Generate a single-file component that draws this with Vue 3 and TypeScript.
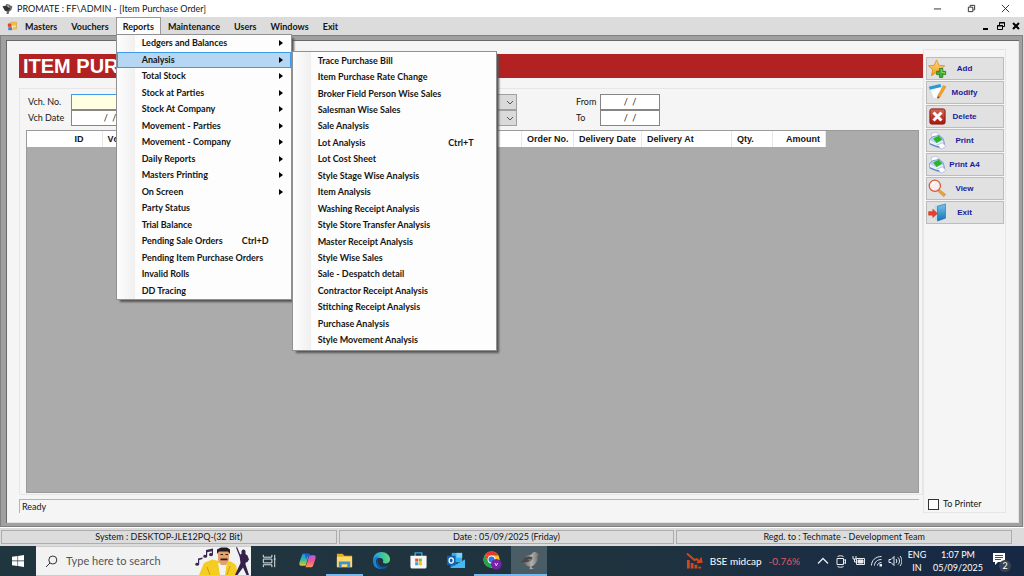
<script setup lang="ts">
import { ref } from 'vue'

interface MenuEntry {
  label: string
  shortcut?: string
  children?: boolean
}

const topMenus: string[] = ['Masters', 'Vouchers', 'Reports', 'Maintenance', 'Users', 'Windows', 'Exit']

const reports: MenuEntry[] = [
  { label: 'Ledgers and Balances', children: true },
  { label: 'Analysis', children: true },
  { label: 'Total Stock', children: true },
  { label: 'Stock at Parties', children: true },
  { label: 'Stock At Company', children: true },
  { label: 'Movement - Parties', children: true },
  { label: 'Movement - Company', children: true },
  { label: 'Daily Reports', children: true },
  { label: 'Masters Printing', children: true },
  { label: 'On Screen', children: true },
  { label: 'Party Status' },
  { label: 'Trial Balance' },
  { label: 'Pending Sale Orders', shortcut: 'Ctrl+D' },
  { label: 'Pending Item Purchase Orders' },
  { label: 'Invalid Rolls' },
  { label: 'DD Tracing' },
]

const analysis: MenuEntry[] = [
  { label: 'Trace Purchase Bill' },
  { label: 'Item Purchase Rate Change' },
  { label: 'Broker Field Person Wise Sales' },
  { label: 'Salesman Wise Sales' },
  { label: 'Sale Analysis' },
  { label: 'Lot Analysis', shortcut: 'Ctrl+T' },
  { label: 'Lot Cost Sheet' },
  { label: 'Style Stage Wise Analysis' },
  { label: 'Item Analysis' },
  { label: 'Washing Receipt Analysis' },
  { label: 'Style Store Transfer Analysis' },
  { label: 'Master Receipt Analysis' },
  { label: 'Style Wise Sales' },
  { label: 'Sale - Despatch detail' },
  { label: 'Contractor Receipt Analysis' },
  { label: 'Stitching Receipt Analysis' },
  { label: 'Purchase Analysis' },
  { label: 'Style Movement Analysis' },
]

const openMenu = ref('Reports')
const openItem = ref('Analysis')
const voucherNo = ref('')
const voucherDate = ref('/  /')
const fromDate = ref('/  /')
const toDate = ref('/  /')
const toPrinter = ref(false)

const actions: { label: string; icon: string }[] = [
  { label: 'Add', icon: 'star' },
  { label: 'Modify', icon: 'edit' },
  { label: 'Delete', icon: 'delete' },
  { label: 'Print', icon: 'print' },
  { label: 'Print A4', icon: 'print' },
  { label: 'View', icon: 'view' },
  { label: 'Exit', icon: 'exit' },
]

const statusCells: string[] = [
  'System : DESKTOP-JLE12PQ-(32 Bit)',
  'Date : 05/09/2025 (Friday)',
  'Regd. to : Techmate - Development Team',
]
</script>

<template>
  <div class="desktop">
    <svg class="defs" aria-hidden="true">
      <defs>
        <linearGradient id="gGold" x1="0" y1="0" x2="0" y2="1">
          <stop offset="0" stop-color="#ffd98a" /><stop offset="1" stop-color="#f59a13" />
        </linearGradient>
        <linearGradient id="gRed" x1="0" y1="0" x2="0" y2="1">
          <stop offset="0" stop-color="#cf6a5c" /><stop offset="1" stop-color="#a81407" />
        </linearGradient>
        <linearGradient id="gDoor" x1="0" y1="0" x2="0" y2="1">
          <stop offset="0" stop-color="#7cc4ea" /><stop offset="1" stop-color="#1173b5" />
        </linearGradient>
        <linearGradient id="gCopA" x1="0" y1="0" x2="0" y2="1">
          <stop offset="0" stop-color="#1f8ff0" /><stop offset="0.5" stop-color="#35b9a0" /><stop offset="1" stop-color="#f3c41c" />
        </linearGradient>
        <linearGradient id="gCopB" x1="0" y1="0" x2="0" y2="1">
          <stop offset="0" stop-color="#b45af0" /><stop offset="0.5" stop-color="#f0568c" /><stop offset="1" stop-color="#ff9a52" />
        </linearGradient>
        <linearGradient id="gEdge" x1="0" y1="0" x2="1" y2="0">
          <stop offset="0" stop-color="#1aa0e8" /><stop offset="1" stop-color="#5fdc70" />
        </linearGradient>
        <linearGradient id="gBird" x1="0" y1="0" x2="1" y2="0">
          <stop offset="0" stop-color="#4b4b4d" /><stop offset="0.6" stop-color="#b3b1ad" /><stop offset="1" stop-color="#6b6a6a" />
        </linearGradient>
        <symbol id="bird" viewBox="0 0 20 20">
          <path d="M1 12 5.500 6.500C7.500 4.500 11 4.500 12.500 3.500 13 1.500 14.500.8 16 1c1.500.2 2.200 1 2.400 2.200L20 4l-1.600.8c.6 3.500-.200 7-3.200 9.700-1 1-2 1.500-3.200 1.800l.4 1.700 2.600.8-5 .3.7-2.800c-2.500 0-4.200-1-5.400-2.600Z" fill="url(#gBird)" />
          <path d="M1 12 5.500 6.500C8 5.500 11 5.500 13 6.500c.5 2-1 3.500-3 4.200-2 .7-3.500.8-4.500 1.300Z" fill="#48484b" />
          <path d="M8 9 13 8 11 11Z" fill="#77777a" />
          <path d="m18.200 3.200 1.800.8-1.600.6Z" fill="#e8722c" />
        </symbol>
        <symbol id="star" viewBox="0 0 20 20">
          <path d="M9 1 11.5 6.6 17.6 7.2 13 11.3 14.4 17.4 9 14.2 3.6 17.5 5 11.3.5 7.2 6.5 6.6Z" fill="url(#gGold)" stroke="#dc8614" stroke-width=".8" />
          <path d="M12 10h3.6v3h3v3.4h-3v3H12v-3H9V13h3Z" fill="#3fae32" stroke="#1e7a1a" stroke-width=".8" />
          <path d="M13.2 11.3h1.2v3h3v1" fill="none" stroke="#9be28b" stroke-width=".8" />
        </symbol>
        <symbol id="edit" viewBox="0 0 20 20">
          <path d="M1 4 13 1 16 13 6 17Z" fill="#fdfeff" stroke="#bcd0df" stroke-width=".6" />
          <path d="M.8 4 13 1 14 4.2 2 7.2Z" fill="#2d97d8" />
          <path d="M16.4 2.6 18.8 4 12.6 14.8 10.3 16.3 10.2 13.4Z" fill="#f6a11f" stroke="#c97612" stroke-width=".5" />
          <path d="m10.2 14 2 1.1-1.9 1.2Z" fill="#4a3a2d" />
        </symbol>
        <symbol id="delete" viewBox="0 0 20 20">
          <rect x="2" y="2" width="16" height="16" rx="2" fill="url(#gRed)" stroke="#8f160d" />
          <path d="M5.8 5.8 14.2 14.2M14.2 5.8 5.8 14.2" stroke="#fff" stroke-width="3.2" />
        </symbol>
        <symbol id="print" viewBox="0 0 20 20">
          <path d="M3 3 9 1 12 6 5 9Z" fill="#fff" stroke="#9db8dc" stroke-width=".7" />
          <path d="M1.500 9 5 6 12 4.500 16 8 17.500 14 13 18 2 14Z" fill="#b9cdee" stroke="#6f8fc2" stroke-width=".8" />
          <path d="M5.500 8 11.500 5 15 9 9 12.500Z" fill="#28b526" />
          <path d="M2 9.5 9 13 16 10 15 14 9 15.500 2 12.600Z" fill="#e9f1fd" />
          <path d="M9 15 15 12.500 19 16 14 19Z" fill="#fff" stroke="#8fa9d2" stroke-width=".6" />
          <path d="M2.500 13.500 9 16.500 12 16.400" fill="none" stroke="#4f72b0" stroke-width=".9" />
        </symbol>
        <symbol id="view" viewBox="0 0 20 20">
          <path d="m12.2 11.4 6.2 4.6-1.6 2.5-6.3-5.3Z" fill="#efa238" stroke="#c77e1c" stroke-width=".6" />
          <circle cx="7.2" cy="7.2" r="5.900" fill="#f8eeee" stroke="#d65b3b" stroke-width="1.3" />
          <path d="M4 6.5A3.6 3.6 0 0 1 8.5 3.6" fill="none" stroke="#fff" stroke-width="1.4" />
        </symbol>
        <symbol id="exit" viewBox="0 0 20 20">
          <path d="M7 2.6 18 1V16.4L10 18.6 7 17Z" fill="#b9dcef" />
          <path d="M10 3.5 18.4 1V16L10 19Z" fill="url(#gDoor)" stroke="#126ba6" stroke-width=".6" />
          <path d="M.6 9H5V6.4L10 11 5 15.4V12.8H.6Z" fill="#ee3e2b" stroke="#c22718" stroke-width=".4" />
        </symbol>
      </defs>
    </svg>

    <header class="titlebar">
      <svg class="app-icon" viewBox="0 0 20 20" aria-hidden="true">
        <path d="M1 5 6 4 8 1 13 2 16 4 19 5 17 12 13 15 12 19 8 19 9 15 5 13Z" fill="#6a6a6b" />
        <path d="M1 5 8 5 15 9 12 13 6 13Z" fill="#303032" /><path d="m9 3 4 1-1 4Z" fill="#b5b5b3" />
      </svg>
      <h1>PROMATE : FF\ADMIN - [Item Purchase Order]</h1>
      <div class="window-buttons">
        <button type="button" aria-label="Minimize"><svg viewBox="0 0 10 10"><path d="M1 5.5H9" /></svg></button>
        <button type="button" aria-label="Restore"><svg viewBox="0 0 10 10"><path d="M1.5 3.5h5v5h-5ZM3.5 3V1.5h5v5H7" /></svg></button>
        <button type="button" aria-label="Close"><svg viewBox="0 0 10 10"><path d="m1 1 8 8M9 1 1 9" /></svg></button>
      </div>
    </header>

    <nav class="menubar">
      <svg class="form-icon" viewBox="0 0 12 12" aria-hidden="true">
        <path d="M4.500 1.500h7v8h-7Z" fill="#fff6d8" stroke="#c8a04a" />
        <path d="M6 2h5v3.500H6Z" fill="#f5b82e" /><path d="M1 3h4.500v4H1Z" fill="#d9482b" />
        <path d="M1.500 7.500H6V11H1.500Z" fill="#3f7fdc" /><path d="M7 6.500h4V10H7Z" fill="#f2c649" />
      </svg>
      <ul class="menus">
        <li v-for="menu in topMenus" :key="menu" :class="{ open: menu === openMenu }">
          <button type="button" @click="openMenu = menu">{{ menu }}</button>
          <ul v-if="menu === 'Reports' && openMenu === 'Reports'" class="dropdown reports">
            <li v-for="item in reports" :key="item.label" :class="{ selected: item.label === openItem }">
              <button type="button" @click="openItem = item.label">
                <span>{{ item.label }}</span>
                <span v-if="item.shortcut" class="shortcut">{{ item.shortcut }}</span>
                <svg v-if="item.children" class="arrow" viewBox="0 0 4 6" aria-hidden="true"><path d="M0 0 4 3 0 6Z" /></svg>
              </button>
              <ul v-if="item.label === 'Analysis' && openItem === 'Analysis'" class="dropdown analysis">
                <li v-for="sub in analysis" :key="sub.label">
                  <button type="button">
                    <span>{{ sub.label }}</span>
                    <span v-if="sub.shortcut" class="shortcut">{{ sub.shortcut }}</span>
                  </button>
                </li>
              </ul>
            </li>
          </ul>
        </li>
      </ul>
      <div class="child-buttons">
        <button type="button" aria-label="Minimize form"><svg viewBox="0 0 10 10"><path d="M2 8H7" stroke-width="2" /></svg></button>
        <button type="button" aria-label="Restore form"><svg viewBox="0 0 10 10"><path d="M1.5 4.5h5v4h-5ZM1 5H7M3.5 4V1.5h5v4H7M3 2h6" /></svg></button>
        <button type="button" aria-label="Close form"><svg viewBox="0 0 10 10"><path d="m2 2 6 6M8 2 2 8" stroke-width="2" /></svg></button>
      </div>
    </nav>

    <main class="mdi">
      <div class="form">
        <section class="work">
          <h2>ITEM PURCHASE ORDER</h2>
          <div class="group">
            <div class="filters">
              <div class="pair voucher">
                <label for="vno">Vch. No.</label>
                <input id="vno" v-model="voucherNo" class="focused" type="text" />
                <label for="vdate">Vch Date</label>
                <input id="vdate" v-model="voucherDate" type="text" />
              </div>
              <div class="combos">
                <div class="combo">
                  <select disabled aria-label="Party"><option></option></select>
                  <svg viewBox="0 0 8 5" aria-hidden="true"><path d="m1 1 3 3 3-3" /></svg>
                </div>
                <div class="combo">
                  <select disabled aria-label="Item"><option></option></select>
                  <svg viewBox="0 0 8 5" aria-hidden="true"><path d="m1 1 3 3 3-3" /></svg>
                </div>
              </div>
              <div class="pair range">
                <label for="from">From</label>
                <input id="from" v-model="fromDate" type="text" />
                <label for="to">To</label>
                <input id="to" v-model="toDate" type="text" />
              </div>
            </div>
            <div class="grid">
              <table>
                <colgroup>
                  <col class="c-id" /><col class="c-no" /><col class="c-wide" /><col class="c-order" />
                  <col class="c-date" /><col class="c-at" /><col class="c-qty" /><col class="c-amount" />
                </colgroup>
                <thead>
                  <tr>
                    <th class="id">ID</th>
                    <th>Vch. No.</th>
                    <th></th>
                    <th>Order No.</th>
                    <th>Delivery Date</th>
                    <th>Delivery At</th>
                    <th>Qty.</th>
                    <th class="amount">Amount</th>
                  </tr>
                </thead>
              </table>
            </div>
          </div>
          <p class="ready">Ready</p>
        </section>

        <aside class="side">
          <button v-for="action in actions" :key="action.label" type="button">
            <svg aria-hidden="true"><use :href="'#' + action.icon" /></svg>
            <span>{{ action.label }}</span>
          </button>
          <label class="printer"><input v-model="toPrinter" type="checkbox" />To Printer</label>
        </aside>
      </div>
    </main>

    <footer class="status">
      <span v-for="cell in statusCells" :key="cell">{{ cell }}</span>
    </footer>

    <div class="taskbar">
      <button class="start" type="button" aria-label="Start">
        <svg viewBox="0 0 12 12"><path d="M0 1.7 5.5 1v4.6H0ZM6.1.9 12 0v5.6H6.1ZM0 6.3h5.5V11L0 10.3ZM6.1 6.3H12V12l-5.9-.9Z" fill="#fff" /></svg>
      </button>
      <div class="search">
        <svg class="lens" viewBox="0 0 13 13" aria-hidden="true"><circle cx="7.8" cy="5" r="4" /><path d="M5 8 1 12" /></svg>
        <input type="text" placeholder="Type here to search" aria-label="Search" />
        <svg class="art" viewBox="0 0 56 28" aria-hidden="true">
          <g fill="#3a2852">
            <path d="M3 11.500 7.500 10.500v1.600L4.200 13v4.200a2 1.500 0 1 1-1.200-1.300Z" />
            <path d="M11 3 18 1.500v6.200a2 1.500 0 1 1-1.200-1.400V4.200l-4.600 1v4a2 1.500 0 1 1-1.200-1.300Z" />
          </g>
          <path d="M4 28 9 16 17 12.500 24 14 36 14.500 41 18 43 28Z" fill="#f4cc22" />
          <path d="m12 20 3 8M35 19l-3 9" stroke="#cf9d10" />
          <path d="m23 16 9-1-2 13h-5Z" fill="#f2f2ef" />
          <path d="M23 4h11v9l-3 5h-5l-3-5Z" fill="#e6a06b" />
          <path d="M22 7V2.500L26 .5h6l3 2V7l-2-2.500h-9Z" fill="#211b1e" />
          <path d="M25.500 11.500h7v1.800h-7Z" fill="#2e1c1a" /><path d="M25.500 7.500h2.500M30.500 7.500H33" stroke="#2e1c1a" />
          <path d="M41 .5 42 0l3.200 7.500 1.300-.5V4.500a2 2 0 0 1 4 0V7l2 1.500 1.500 4-2 3-1-.6-.6 2L54 28h-2.500L48 20.500 42.500 28H40l5.500-12-.8-6Z" fill="#35204b" />
        </svg>
      </div>
      <div class="apps">
        <button type="button" class="taskview" aria-label="Task view">
          <svg viewBox="0 0 20 20"><path d="M3.500 4v2.500h9V4M3.500 8.500h9v4h-9ZM3.500 17v-2.500h9V17M15.500 4v13M14.500 8.500h2" fill="none" stroke="#e6ebed" /></svg>
        </button>
        <button type="button" aria-label="Copilot">
          <svg viewBox="0 0 20 20"><path d="M6 3h6l-4 12.500H4c-3 0-3-2-2-5L4 5c.5-1.500 1-2 2-2Z" fill="url(#gCopA)" /><path d="M14 17H8l4-12.500h4c3 0 3 2 2 5L16 15c-.500 1.500-1 2-2 2Z" fill="url(#gCopB)" /><path d="M7 3h4c1.500 0 2 1 2.400 2.500H10L8.500 9Z" fill="#1c62d2" /></svg>
        </button>
        <button type="button" class="running" aria-label="File Explorer">
          <svg viewBox="0 0 20 20"><path d="M2 3h6l2 2h8v12H2Z" fill="#e9a820" /><path d="M2 6h16v11H2Z" fill="#ffd96b" /><path d="M4 11h12v6h-3v-3H7v3H4Z" fill="#3d8fd6" /></svg>
        </button>
        <button type="button" aria-label="Edge">
          <svg viewBox="0 0 20 20"><path d="M1 10C1 4.500 5 1 10 1s9 3.500 9 7.600c0 3-2.200 4.600-4.800 4.600-2 0-3-.8-2.500-1.800.7-1.800-.500-4-3.200-4C5 7.400 1 8.500 1 10Z" fill="url(#gEdge)" /><path d="M1 10c0-3 3.500-4.600 7-4-3 1-4.400 4-3.300 7.300C6 17 9.500 18 12.500 17.500 10 19.500 1 20 1 10Z" fill="#1683d4" /><path d="M8 7.400c-3 2-2.600 7.400 1.800 9 3.200 1 6-.4 7.600-1.800C15 19 10.500 20 7.500 18 3.500 15.500 4 9 8 7.400Z" fill="#0c59a4" /></svg>
        </button>
        <button type="button" aria-label="Microsoft Store">
          <svg viewBox="0 0 20 20"><path d="M6.500 6V2h7v4" fill="none" stroke="#35a7e4" stroke-width="1.500" /><path d="M1.500 5h17v11.500a2 2 0 0 1-2 2h-13a2 2 0 0 1-2-2Z" fill="#f4f6f8" /><path d="M6.500 8H9.700v3.200H6.500Z" fill="#ef5125" /><path d="M10.300 8h3.200v3.200h-3.200Z" fill="#7db928" /><path d="M6.500 11.800H9.700V15H6.500Z" fill="#2aa6e5" /><path d="M10.300 11.800h3.200V15h-3.200Z" fill="#fbb81a" /></svg>
        </button>
        <button type="button" aria-label="Outlook">
          <svg viewBox="0 0 20 20"><path d="M6 2h11v10H6Z" fill="#35b0ee" /><path d="M11 2h6v5h-6Z" fill="#7bd3f8" /><path d="M4 9l8 5 8-5v8a1 1 0 0 1-1 1H5Z" fill="#1683d8" /><path d="m4 18 16-9v9Z" fill="#45b8f2" /><path d="M1 5h9v10H1Z" fill="#0c61b3" /><ellipse cx="5.500" cy="10" rx="2.200" ry="2.700" fill="none" stroke="#fff" stroke-width="1.400" /></svg>
        </button>
        <button type="button" class="running" aria-label="Chrome">
          <svg viewBox="0 0 20 20"><circle cx="9" cy="9" r="8.500" fill="#fbc116" /><path d="M1.600 4.700A8.500 8.500 0 0 1 16.400 4.700H9Z" fill="#e33b2e" /><path d="M1.600 4.700A8.500 8.500 0 0 0 8.500 17.500l3.500-6.200L6 11Z" fill="#2aa14c" /><path d="M1.600 4.700 6 11 9 5Z" fill="#e33b2e" /><circle cx="9" cy="9" r="4.200" fill="#fff" /><circle cx="9" cy="9" r="3.200" fill="#2f75e8" /><circle cx="14" cy="14" r="5.600" fill="#7723a8" /><path d="m12.600 12.600 1.400 3 1.400-3" fill="none" stroke="#e8d5f3" /></svg>
        </button>
        <button type="button" class="running current" aria-label="Promate">
          <svg viewBox="0 0 20 20"><use href="#bird" /></svg>
        </button>
      </div>
      <div class="tray">
        <button type="button" class="news">
          <svg viewBox="0 0 18 18" aria-hidden="true"><path d="m1 1 8 7 2-1 5 3M11.500 10.500 16.500 10 15.500 5.500" fill="none" stroke="#d4461d" stroke-width="2" /><path d="M1 8h3v9H1ZM5 11h3v6H5ZM9 13h3v4H9ZM13 15h3v2h-3Z" fill="#d4461d" /></svg>
          <span>BSE midcap</span><span class="down">-0.76%</span>
        </button>
        <div class="tray-icons">
          <svg viewBox="0 0 14 14" aria-label="Show hidden icons"><path d="m2 9.500 5-5 5 5" stroke-width="1.300" /></svg>
          <svg viewBox="0 0 14 14" aria-label="Meet now"><path d="M3 4.500h6.500v6H3ZM9.500 6.500l2-1v4l-2-1M3.500 2.500c2-1 4-1 6 0M3.500 12.500c2 1 4 1 6 0" /></svg>
          <svg viewBox="0 0 14 14" aria-label="Battery"><path d="M4.500 4.500h8v6h-8ZM1 2v3h3V2M2.500 5v3h2" /><path d="M6 6h5v3H6Z" fill="#e8ecf2" /></svg>
          <svg viewBox="0 0 14 14" aria-label="Wi-Fi"><path d="M1.500 11.500c0-5 4-9 10-9M4.500 11.500c0-3.500 3-6 7-6M7.500 11.500c0-2 2-3 4-3" /><path d="M9.500 10h2.500v2.500H9.500Z" fill="#e8ecf2" stroke="none" /></svg>
          <svg viewBox="0 0 14 14" aria-label="Volume"><path d="M1 5.500h2l3-3v9l-3-3H1ZM8 5c1 1 1 3 0 4M10 3.500c2 2 2 5 0 7M12 2c2.500 3 2.500 7 0 10" /></svg>
        </div>
        <div class="stack lang"><span>ENG</span><span>IN</span></div>
        <div class="stack clock"><span>1:07 PM</span><span>05/09/2025</span></div>
        <button type="button" class="notes" aria-label="Notifications">
          <svg viewBox="0 0 18 20" aria-hidden="true"><path d="M1 2h12v9H6l-3 3v-3H1Z" fill="#fff" /><path d="M3 4.500h8M3 6.500h8M3 8.500h6" stroke="#415069" /></svg>
          <span class="badge">2</span>
        </button>
      </div>
    </div>
  </div>
</template>

<style>
body {
  margin: 0;
}
</style>

<style scoped>
* {
  box-sizing: border-box;
}
button,
input,
select {
  font: inherit;
  color: inherit;
}
button {
  border: 0;
  padding: 0;
  background: none;
}
ul,
h1,
h2,
p {
  margin: 0;
  padding: 0;
  list-style: none;
  font-weight: inherit;
}
.desktop {
  display: flex;
  flex-direction: column;
  min-height: 100vh;
  background: #dcdcdc;
  color: #151515;
  font: 9px/12px Lato, 'Open Sans', sans-serif;
}
.defs {
  position: absolute;
  width: 0;
  height: 0;
}

.titlebar {
  display: flex;
  align-items: center;
  height: 17px;
  padding: 0 2px;
  background: #fff;
}
.app-icon {
  width: 11px;
  height: 12px;
  margin-right: 4px;
}
h1 {
  flex: 1;
  font-size: 9px;
}
.window-buttons {
  display: flex;
}
.window-buttons button {
  display: flex;
  justify-content: center;
  width: 34px;
}
.window-buttons svg {
  width: 9px;
  height: 9px;
  fill: none;
  stroke: #222;
}

.menubar {
  display: flex;
  align-items: stretch;
  height: 18px;
  padding-left: 7px;
}
.form-icon {
  align-self: center;
  width: 10px;
  height: 10px;
  margin-right: 1px;
}
.menus {
  display: flex;
  flex: 1;
  font-weight: 700;
}
.menus > li {
  position: relative;
  display: flex;
  border: 1px solid transparent;
  border-bottom: 0;
}
.menus > li > button {
  padding: 0 6px;
}
.menus > .open {
  border-color: #999;
  background: #fdfdfd;
}
.dropdown {
  position: absolute;
  display: grid;
  grid-auto-rows: 1fr;
  border: 1px solid #909090;
  background: linear-gradient(90deg, #fdfdfd, #f0f0f0 18px, #fdfdfd 18px);
  box-shadow: 3px 3px 2px -1px #555;
}
.reports {
  z-index: 2;
  top: 16px;
  left: -1px;
  width: 176px;
  height: 266px;
}
.analysis {
  z-index: 3;
  top: -1px;
  left: 175px;
  width: 205px;
  height: 300px;
  padding: 1px 0;
}
.dropdown li {
  position: relative;
  display: grid;
}
.dropdown button {
  display: flex;
  align-items: center;
  min-height: 0;
  padding: 0 8px 0 25px;
  text-align: left;
}
.dropdown .shortcut {
  margin-left: auto;
  padding-right: 14px;
}
.selected > button {
  background: #b5d7f3;
  outline: 1px solid #3f9be8;
  outline-offset: -1px;
}
.arrow {
  width: 4px;
  height: 6px;
  margin-left: auto;
}
.child-buttons {
  display: flex;
  align-items: center;
  gap: 5px;
  padding-right: 3px;
}
.child-buttons button {
  display: flex;
}
.child-buttons svg {
  width: 10px;
  height: 10px;
  fill: none;
  stroke: #000;
}

.mdi {
  display: flex;
  flex: 1;
  border: solid #a0a0a0;
  border-width: 5px 4px 4px 6px;
  margin-right: 1px;
  box-shadow: inset 1px 1px #696969;
  outline: 1px solid #808080;
  outline-offset: -1px;
}
.form {
  display: flex;
  flex: 1;
  padding: 8px 12px 9px 12px;
  border: solid #e3e3e3;
  border-width: 0 1px 1px 0;
  margin: 1px 0 0 1px;
  background: #f5f5f5;
}
.work {
  display: flex;
  flex: 1;
  flex-direction: column;
}
h2 {
  height: 24px;
  margin-top: 5px;
  padding-left: 4px;
  background: #b22222;
  color: #fff;
  font: bold 20px/24px 'Liberation Sans', Arial, sans-serif;
}
.group {
  display: flex;
  flex: 1;
  flex-direction: column;
  margin-top: 10px;
  padding: 5px 3px 1px 6px;
  border: 1px solid #e6e6e6;
}
.filters {
  display: flex;
  height: 36px;
  padding-left: 1px;
}
.pair {
  display: grid;
  grid-auto-rows: 16px;
  align-items: center;
}
.voucher {
  grid-template-columns: 44px 120px;
}
.range {
  grid-template-columns: 25px 60px;
  margin-left: 58px;
}
.pair label {
  padding-left: 1px;
}
.pair input {
  width: 100%;
  height: 16px;
  padding: 0 0 2px;
  border: 1px solid #858585;
  border-radius: 0;
  background: #fff;
  text-align: center;
  white-space: pre;
  outline: 0;
}
.voucher input {
  padding-right: 42px;
}
.pair .focused {
  border-color: #3f9be8;
  background: #ffffe1;
}
.combos {
  display: grid;
  grid-auto-rows: 16px;
  margin-left: 106px;
}
.combo {
  display: grid;
  width: 220px;
}
.combo > * {
  grid-area: 1 / 1;
}
.combo select {
  height: 16px;
  padding: 0;
  border: 1px solid #a0a0a0;
  border-radius: 0;
  appearance: none;
  background: #dadada;
  opacity: 1;
}
.combo svg {
  z-index: 1;
  align-self: center;
  justify-self: end;
  width: 8px;
  height: 5px;
  margin-right: 3px;
  fill: none;
  stroke: #555;
}
.grid {
  flex: 1;
  border: 1px solid #9a9a9a;
  background: #ababab;
}
table {
  border-collapse: collapse;
  table-layout: fixed;
  width: 799px;
  background: #fff;
}
.c-id {
  width: 75px;
}
.c-no {
  width: 77px;
}
.c-order {
  width: 52px;
}
.c-date {
  width: 68px;
}
.c-at {
  width: 90px;
}
.c-qty {
  width: 41px;
}
.c-amount {
  width: 53px;
}
th {
  height: 16px;
  padding: 0 0 0 5px;
  border-right: 1px solid #e8e8e8;
  font: bold 9px/12px 'Liberation Sans', Arial, sans-serif;
  text-align: left;
  white-space: nowrap;
}
th.id {
  padding-right: 18px;
  text-align: right;
}
th.amount {
  padding-right: 5px;
  text-align: right;
}
.ready {
  height: 14px;
  margin: 4px 4px 0 0;
  padding: 1px 2px;
  border: solid #b4b4b4;
  border-width: 1px 0 0 1px;
}

.side {
  display: flex;
  flex-direction: column;
  gap: 1px;
  width: 83px;
  padding: 7px 1px 0 2px;
  border: 1px solid #e6e6e6;
}
.side button {
  display: grid;
  grid-template-columns: 20px 1fr;
  align-items: center;
  height: 23px;
  padding: 0 22px 0 1px;
  border: 1px solid #bcbcbc;
  background: #e1e1e1;
  color: #1a1a9c;
  font: bold 8px/12px 'Liberation Sans', Arial, sans-serif;
  white-space: nowrap;
}
.side svg {
  width: 19px;
  height: 19px;
}
.printer {
  display: flex;
  align-items: center;
  gap: 4px;
  margin: auto 0 2px 2px;
}
.printer input {
  width: 11px;
  height: 11px;
  margin: 0;
  border: 1px solid #333;
  appearance: none;
  background: #fff;
}
.printer input:checked {
  background: #333;
}

.status {
  display: grid;
  grid-template-columns: repeat(3, 1fr);
  gap: 2px;
  height: 19px;
  padding: 2px 12px 2px 1px;
  border-top: 1px solid #fff;
}
.status span {
  border: 1px solid #adadad;
  text-align: center;
}

.taskbar {
  display: flex;
  height: 30px;
  background: linear-gradient(90deg, #20363e, #1f333f 60%, #172845);
  color: #fff;
}
.start {
  width: 36px;
}
.start svg {
  display: block;
  width: 12px;
  height: 12px;
  margin: auto;
}
.search {
  display: flex;
  align-items: center;
  width: 215px;
  padding-left: 9px;
  border: 1px solid #ccc;
  border-width: 1px 0;
  background: #f2f2f2;
}
.lens {
  width: 13px;
  height: 13px;
  fill: none;
  stroke: #333;
}
.search input {
  flex: 1;
  min-width: 0;
  padding: 0 0 0 8px;
  border: 0;
  background: none;
  font-size: 11px;
  line-height: 16px;
}
.search input::placeholder {
  color: #555;
  opacity: 1;
}
.art {
  width: 56px;
  height: 28px;
}
.apps {
  display: flex;
  flex: 1;
}
.apps button {
  display: grid;
  place-items: center;
  width: 37px;
  border-bottom: 2px solid transparent;
}
.apps .taskview {
  margin-right: 1px;
}
.apps svg {
  width: 19px;
  height: 19px;
}
.apps .running {
  border-color: #76b9ed;
}
.apps .current {
  width: 36px;
  background: #4a5c66;
}
.tray {
  display: flex;
  align-items: center;
}
.news {
  display: flex;
  align-items: center;
  gap: 7px;
  font-size: 10px;
}
.news svg {
  width: 17px;
  height: 18px;
}
.down {
  color: #e0596a;
}
.tray-icons {
  display: flex;
  gap: 4px;
  margin-left: 16px;
}
.tray-icons svg {
  width: 14px;
  height: 14px;
  fill: none;
  stroke: #e8ecf2;
}
.stack {
  display: grid;
  justify-items: center;
}
.stack span {
  line-height: 13px;
}
.lang {
  width: 30px;
}
.clock {
  width: 52px;
}
.notes {
  position: relative;
  width: 28px;
  height: 20px;
  margin: 0 4px 0 8px;
}
.notes svg {
  display: block;
  width: 18px;
  height: 20px;
}
.badge {
  position: absolute;
  right: 9px;
  bottom: -1px;
  width: 12px;
  height: 12px;
  border-radius: 50%;
  background: #39424f;
}
</style>
